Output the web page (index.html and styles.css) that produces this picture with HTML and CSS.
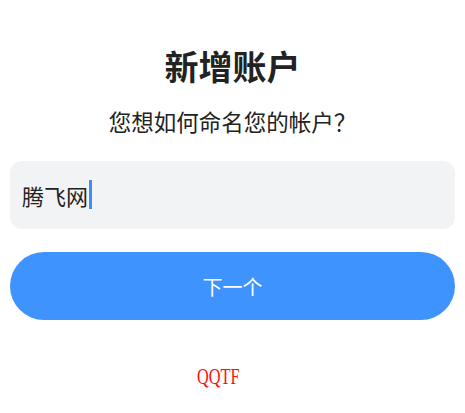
FILE: index.html
```html
<!DOCTYPE html>
<html lang="zh-CN">
<head>
<meta charset="utf-8">
<link rel="stylesheet" href="styles.css">
</head>
<body>
<main class="page">
  <h1 class="title">新增账户</h1>
  <p class="subtitle">您想如何命名您的帐户？</p>
  <div class="field"><span class="field-text">腾飞网</span><span class="caret"></span></div>
  <button class="next-btn" type="button">下一个</button>
  <div class="footer"><span class="brand">QQTF</span></div>
</main>
</body>
</html>
```
FILE: styles.css
```css
html, body {
  margin: 0;
  padding: 0;
  background: #ffffff;
}
body {
  font-family: "Noto Sans CJK SC", "Noto Sans", sans-serif;
  color: #222222;
}
.page {
  width: 465px;
  height: 413px;
  box-sizing: border-box;
  padding: 45px 10px 0;
  display: flex;
  flex-direction: column;
}
.title {
  margin: 0;
  font-size: 34px;
  line-height: 42px;
  font-weight: 700;
  text-align: center;
  color: #222222;
}
.subtitle {
  margin: 19px 0 0;
  font-size: 22.5px;
  line-height: 30px;
  text-align: center;
  color: #222222;
}
.field {
  margin-top: 25px;
  height: 68px;
  border-radius: 12px;
  background: #f2f3f5;
  display: flex;
  align-items: center;
  padding-left: 12px;
}
.field-text {
  font-size: 22px;
  line-height: 30px;
  color: #222222;
}
.caret {
  display: inline-block;
  width: 3px;
  height: 29px;
  margin-left: 1px;
  margin-top: -2px;
  background: #3d8ef8;
}
.next-btn {
  margin-top: 23px;
  height: 68px;
  width: 100%;
  border: 0;
  border-radius: 34px;
  background: #3e93ff;
  color: #ffffff;
  font-family: "Noto Sans CJK SC", "Noto Sans", sans-serif;
  font-size: 20px;
  padding: 0;
}
.footer {
  margin-top: 41px;
  text-align: center;
  line-height: 30px;
  padding-right: 28px;
}
.brand {
  display: inline-block;
  font-family: "Liberation Serif", serif;
  font-size: 24px;
  color: #ff1010;
  transform: scaleX(0.68);
}
```
